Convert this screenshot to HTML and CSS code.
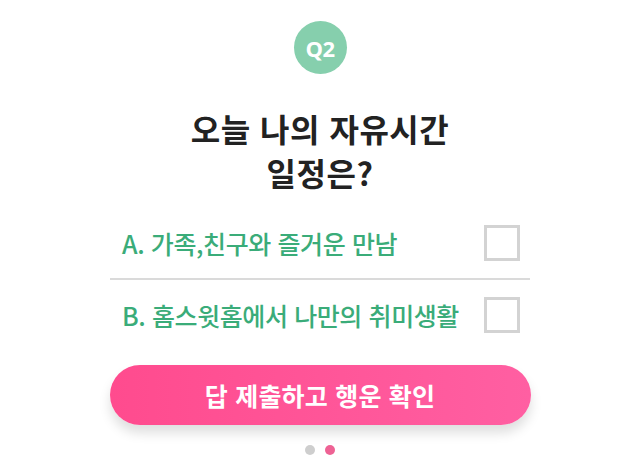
FILE: index.html
```html
<!DOCTYPE html>
<html lang="ko">
<head>
<meta charset="utf-8">
<link rel="stylesheet" href="styles.css">
</head>
<body>
<div class="quiz">
  <div class="badge">Q2</div>
  <h1 class="title">오늘 나의 자유시간<br>일정은?</h1>
  <ul class="options">
    <li class="option"><span class="label">A. 가족,친구와 즐거운 만남</span><span class="check"></span></li>
    <li class="option"><span class="label">B. 홈스윗홈에서 나만의 취미생활</span><span class="check"></span></li>
  </ul>
  <button class="submit">답 제출하고 행운 확인</button>
  <div class="dots"><span class="dot"></span><span class="dot active"></span></div>
</div>
</body>
</html>
```
FILE: styles.css
```css
html, body {
  margin: 0;
  padding: 0;
  background: #ffffff;
}
body {
  font-family: "Noto Sans CJK KR", "Noto Sans", sans-serif;
}
.quiz {
  width: 420px;
  margin: 0 auto;
  padding-top: 21px;
  display: flex;
  flex-direction: column;
  align-items: center;
}
.badge {
  width: 53px;
  height: 53px;
  border-radius: 50%;
  background: #86cfad;
  color: #ffffff;
  font-family: "Open Sans", "Noto Sans", sans-serif;
  font-weight: 700;
  font-size: 22px;
  display: flex;
  align-items: center;
  justify-content: center;
  letter-spacing: -0.5px;
}
.title {
  margin: 32px 0 0;
  font-size: 32px;
  line-height: 44px;
  font-weight: 700;
  color: #222222;
  text-align: center;
  letter-spacing: 0.5px;
}
.options {
  list-style: none;
  margin: 14px 0 0;
  padding: 0;
  width: 100%;
}
.option {
  height: 70px;
  display: flex;
  align-items: center;
  justify-content: space-between;
  padding: 0 10px 0 12px;
}
.option + .option {
  border-top: 2px solid #dadada;
}
.label {
  color: #3aac79;
  font-size: 25px;
  font-weight: 500;
  letter-spacing: -0.4px;
}
.check {
  width: 30px;
  height: 30px;
  border: 3px solid #d3d3d3;
  flex-shrink: 0;
}
.submit {
  margin-top: 15px;
  width: 421px;
  height: 60px;
  border: none;
  border-radius: 30px;
  background: linear-gradient(90deg, #ff4b8e 0%, #ff5fa2 100%);
  color: #ffffff;
  font-family: "Noto Sans CJK KR", "Noto Sans", sans-serif;
  font-size: 25px;
  font-weight: 700;
  letter-spacing: 0.2px;
  box-shadow: 0 8px 12px rgba(0, 0, 0, 0.13);
  padding: 0;
}
.dots {
  margin-top: 20px;
  display: flex;
  gap: 10px;
}
.dot {
  width: 10px;
  height: 10px;
  border-radius: 50%;
  background: #cecece;
}
.dot.active {
  background: #ee6294;
}
```
